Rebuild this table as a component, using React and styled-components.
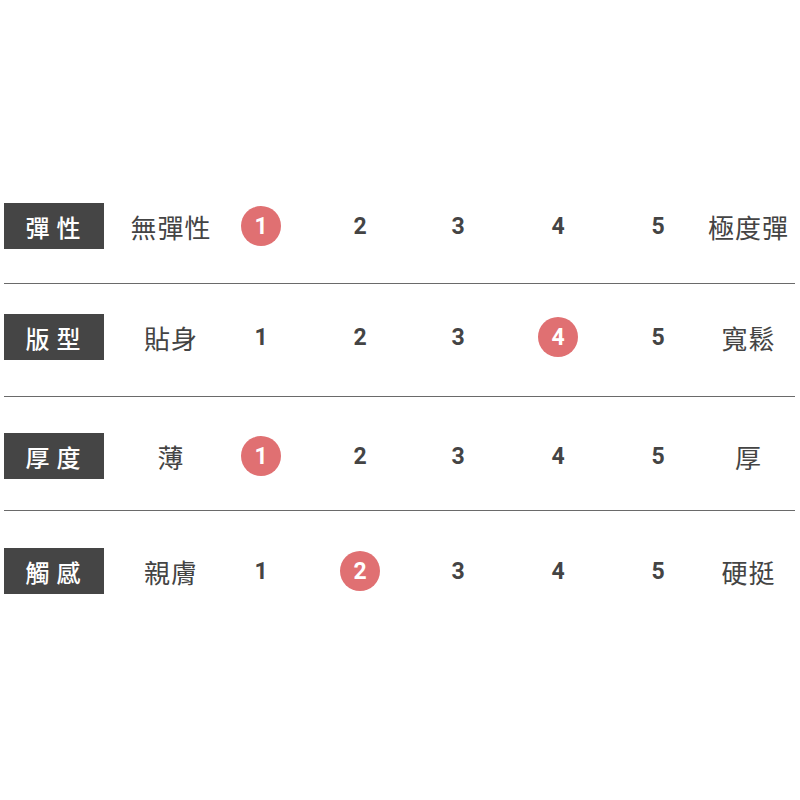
import React from "react";
import styled, { createGlobalStyle } from "styled-components";

const rows = [
  { label: "彈性", low: "無彈性", high: "極度彈", active: 1, top: 0, bottom: 34 },
  { label: "版型", low: "貼身", high: "寬鬆", active: 4, top: 30, bottom: 36 },
  { label: "厚度", low: "薄", high: "厚", active: 1, top: 36, bottom: 31 },
  { label: "觸感", low: "親膚", high: "硬挺", active: 2, top: 37, bottom: 0, last: true },
];

const GlobalStyle = createGlobalStyle`
  body {
    margin: 0;
    background: #fff;
    font-family: "Noto Sans CJK TC", "Noto Sans", sans-serif;
  }
`;

const App = () => (
  <>
    <GlobalStyle />
    <Page>
      <Table>
        {rows.map((row) => (
          <Row key={row.label} $top={row.top} $bottom={row.bottom} $last={row.last}>
            <Label>{row.label}</Label>
            <Low>{row.low}</Low>
            {[1, 2, 3, 4, 5].map((n) => (
              <Cell key={n}>
                <Num $active={n === row.active}>{n}</Num>
              </Cell>
            ))}
            <High>{row.high}</High>
          </Row>
        ))}
      </Table>
    </Page>
  </>
);

const Page = styled.div`
  width: 800px;
  height: 800px;
  padding-top: 203px;
  box-sizing: border-box;
`;

const Table = styled.div`
  margin: 0 5px 0 4px;
`;

// columns centred on the scale marks of the picture
const Row = styled.div`
  display: grid;
  grid-template-columns: 100px 112px 90px 108px 88px 112px 88px 1fr;
  align-items: center;
  padding-top: ${({ $top }) => $top}px;
  padding-bottom: ${({ $bottom }) => $bottom}px;
  border-bottom: ${({ $last }) => ($last ? "none" : "1px solid #6a6a6a")};
`;

const Label = styled.div`
  height: 46px;
  background: #454545;
  color: #fff;
  display: flex;
  align-items: center;
  justify-content: center;
  font-size: 24px;
  font-weight: 500;
  letter-spacing: 7px;
  padding-left: 5px;
  box-sizing: border-box;
`;

const Low = styled.div`
  padding-left: 22px;
  text-align: center;
  font-size: 26px;
  color: #444;
  letter-spacing: 1px;
  white-space: nowrap;
`;

const High = styled.div`
  text-align: center;
  font-size: 26px;
  color: #444;
  letter-spacing: 1px;
  white-space: nowrap;
`;

const Cell = styled.div`
  display: flex;
  justify-content: center;
`;

const Num = styled.div`
  width: 40px;
  height: 40px;
  border-radius: 50%;
  display: flex;
  align-items: center;
  justify-content: center;
  padding-top: 1px;
  box-sizing: border-box;
  font-family: Roboto, "Noto Sans", sans-serif;
  font-weight: 700;
  font-size: 23px;
  color: ${({ $active }) => ($active ? "#fff" : "#444")};
  background: ${({ $active }) => ($active ? "#e07072" : "transparent")};
`;

export default App;
